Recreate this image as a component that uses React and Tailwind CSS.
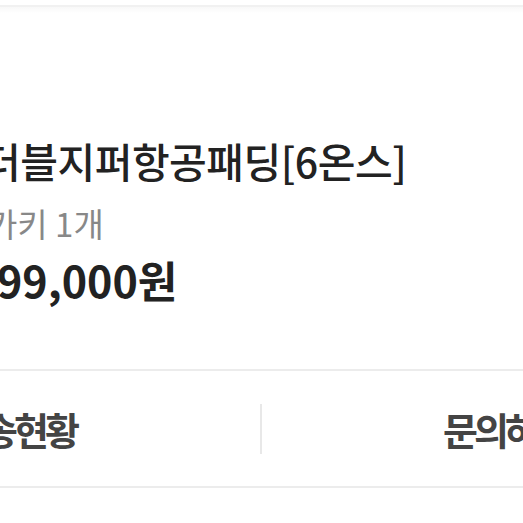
export default function App() {
  return (
    <div className="w-[523px] h-[523px] overflow-hidden bg-white relative" style={{ fontFamily: '"Noto Sans CJK KR", "Noto Sans", sans-serif' }}>
      <div className="h-[5px] bg-white" />
      <div className="h-[2px] bg-[#f1f1f1]" />
      <div className="h-[6px] bg-gradient-to-b from-[#f8f8f8] to-white" />
      <div className="h-[123px]" />
      <div className="flex flex-col">
        <div className="-ml-[17px] whitespace-nowrap text-[41px] leading-[48px] text-[#222] font-medium tracking-[-0.5px]">더블지퍼항공패딩[6온스]</div>
        <div className="-ml-[13px] mt-[19px] whitespace-nowrap text-[33px] leading-[40px] text-[#888]">카키 1개</div>
        <div className="-ml-[3px] mt-[10px] whitespace-nowrap text-[43px] leading-[52px] text-[#222] font-bold">99,000원</div>
      </div>
      <div className="absolute left-0 right-0 top-[369px] h-[2px] bg-[#ececec]" />
      <div className="absolute left-0 right-0 top-[371px] h-[115px] flex items-center">
        <div className="w-[260px] shrink-0 flex items-center justify-start overflow-hidden">
          <span className="-ml-[48px] whitespace-nowrap text-[38px] font-bold text-[#444] tracking-[-4px]">배송현황</span>
        </div>
        <div className="w-[2px] h-[50px] shrink-0 bg-[#e8e8e8]" />
        <div className="flex-1 min-w-0 flex items-center justify-start overflow-hidden">
          <span className="ml-[181px] whitespace-nowrap text-[38px] font-bold text-[#444] tracking-[-4px]">문의하기</span>
        </div>
      </div>
      <div className="absolute left-0 right-0 top-[486px] h-[2px] bg-[#ececec]" />
    </div>
  );
}
